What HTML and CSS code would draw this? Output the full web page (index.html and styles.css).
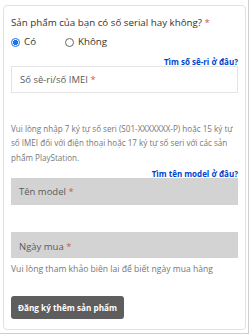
FILE: index.html
```html
<!DOCTYPE html>
<html lang="vi">
<head>
<meta charset="utf-8">
<link rel="stylesheet" href="styles.css">
</head>
<body>
<div class="frame">
  <div class="card">
    <div class="question">Sản phẩm của bạn có số serial hay không? <span class="req">*</span></div>
    <div class="radios">
      <label class="radio"><span class="dot checked"></span>Có</label>
      <label class="radio"><span class="dot"></span>Không</label>
    </div>
    <div class="link-row first"><a class="link">Tìm số sê-ri ở đâu?</a></div>
    <div class="input white">Số sê-ri/số IMEI <span class="req">*</span></div>
    <p class="help serial-help">Vui lòng nhập 7 ký tự số seri (S01-XXXXXXX-P) hoặc 15 ký tự số IMEI đối với điện thoại hoặc 17 ký tự số seri với các sản phẩm PlayStation.</p>
    <div class="link-row second"><a class="link">Tìm tên model ở đâu?</a></div>
    <div class="input gray">Tên model <span class="req">*</span></div>
    <div class="input gray date">Ngày mua <span class="req">*</span></div>
    <p class="help date-help">Vui lòng tham khảo biên lai để biết ngày mua hàng</p>
    <button class="btn">Đăng ký thêm sản phẩm</button>
  </div>
</div>
</body>
</html>
```
FILE: styles.css
```css
html, body { margin: 0; padding: 0; background: #fff; }
body { font-family: "Open Sans", "Noto Sans", sans-serif; color: #333; width: 250px; height: 335px; overflow: hidden; }
.frame { padding: 5px 2px 0 3px; border-right: 1px solid #cfcfcf; border-bottom: 1px solid #cfcfcf; width: 249px; height: 334px; box-sizing: border-box; }
.card { border: 1px solid #e2e2e2; border-radius: 4px; padding: 10px 7px 8px 7px; height: 325px; box-sizing: border-box; }
.question { font-size: 9.75px; line-height: 14px; color: #333; }
.req { color: #d9534f; }
.radios { display: flex; margin-top: 5px; font-size: 9.75px; line-height: 14px; }
.radio { display: flex; align-items: center; gap: 4px; }
.radio + .radio { margin-left: 29px; }
.dot { width: 7px; height: 7px; border: 0.8px solid #666; border-radius: 50%; display: inline-block; background: #fff; }
.dot.checked { border-color: #1a73e8; background: radial-gradient(circle, #1a73e8 0 48%, #fff 55%); }
.link-row { text-align: right; line-height: 10px; height: 10px; }
.link-row.first { margin-top: 5px; }
.link-row.second { margin-top: 1px; height: 12px; }
.link { font-size: 8px; font-weight: 700; color: #0044cc; }
.input { font-size: 9.5px; line-height: 14px; color: #5a5a5a; padding: 6px 8px; box-sizing: border-box; }
.white { border: 1px solid #e4e4e4; height: 27px; margin-top: 2px; }
.gray { background: #d3d3d3; height: 27px; padding-top: 7px; }
.help { font-size: 8.1px; line-height: 14.4px; color: #777; margin: 0; }
.serial-help { margin-top: 29px; }
.date { margin-top: 27px; height: 26px; padding-top: 8px; }
.date-help { margin-top: 5px; line-height: 12px; font-size: 8.6px; }
.btn { display: block; margin-top: 21px; background: #5e5e5e; color: #fff; border: 0; border-radius: 3px; font-family: inherit; font-size: 8.2px; font-weight: 700; height: 23px; width: 113px; padding: 0; }
```
